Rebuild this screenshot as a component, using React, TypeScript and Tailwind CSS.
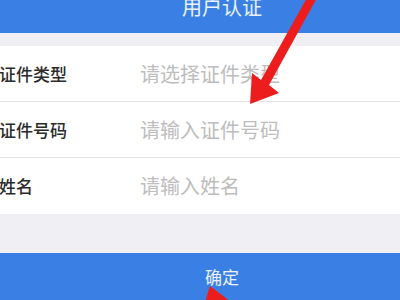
import React from "react";

const cjk = { fontFamily: '"Noto Sans CJK SC", "Noto Sans", sans-serif' };

// 表单行：左侧标签 + 右侧占位提示
function Row({ label, hint, last }: { label: string; hint: string; last?: boolean }) {
  return (
    <div className={`flex h-[56px] items-center bg-white ${last ? "" : "border-b border-[#e3e3e6]"}`}>
      <span className="-ml-[1px] w-[141px] shrink-0 text-[17px] font-medium text-[#2b2b2b]">{label}</span>
      <span className="text-[20px] text-[#bdbdbd]">{hint}</span>
    </div>
  );
}

export default function App() {
  return (
    <div className="relative h-[300px] w-[400px] overflow-hidden bg-[#efeff4]" style={cjk}>
      <div className="w-[444px]">
        <div className="flex h-[33px] items-start justify-center bg-[#3a80e4]">
          <span className="-mt-[7px] text-[20px] leading-[28px] text-white/90">用户认证</span>
        </div>
        <div className="h-[13px]" />
        <div className="bg-white">
          <Row label="证件类型" hint="请选择证件类型" />
          <Row label="证件号码" hint="请输入证件号码" />
          <Row label="姓名" hint="请输入姓名" last />
        </div>
        <div className="h-[39px]" />
        <button className="flex h-[52px] w-full items-center justify-center bg-[#3a80e4] pb-[4px] text-[17px] text-white/90">
          确定
        </button>
      </div>

      <svg className="pointer-events-none absolute left-0 top-0" width="400" height="300" viewBox="0 0 400 300">
        <polygon points="308,-4 318,-4 269,85 279,93 250,104 252,73 261,80" fill="#ee1d1d" />
        <polygon points="210,286 231,302 205,302" fill="#ee1d1d" />
      </svg>
    </div>
  );
}
